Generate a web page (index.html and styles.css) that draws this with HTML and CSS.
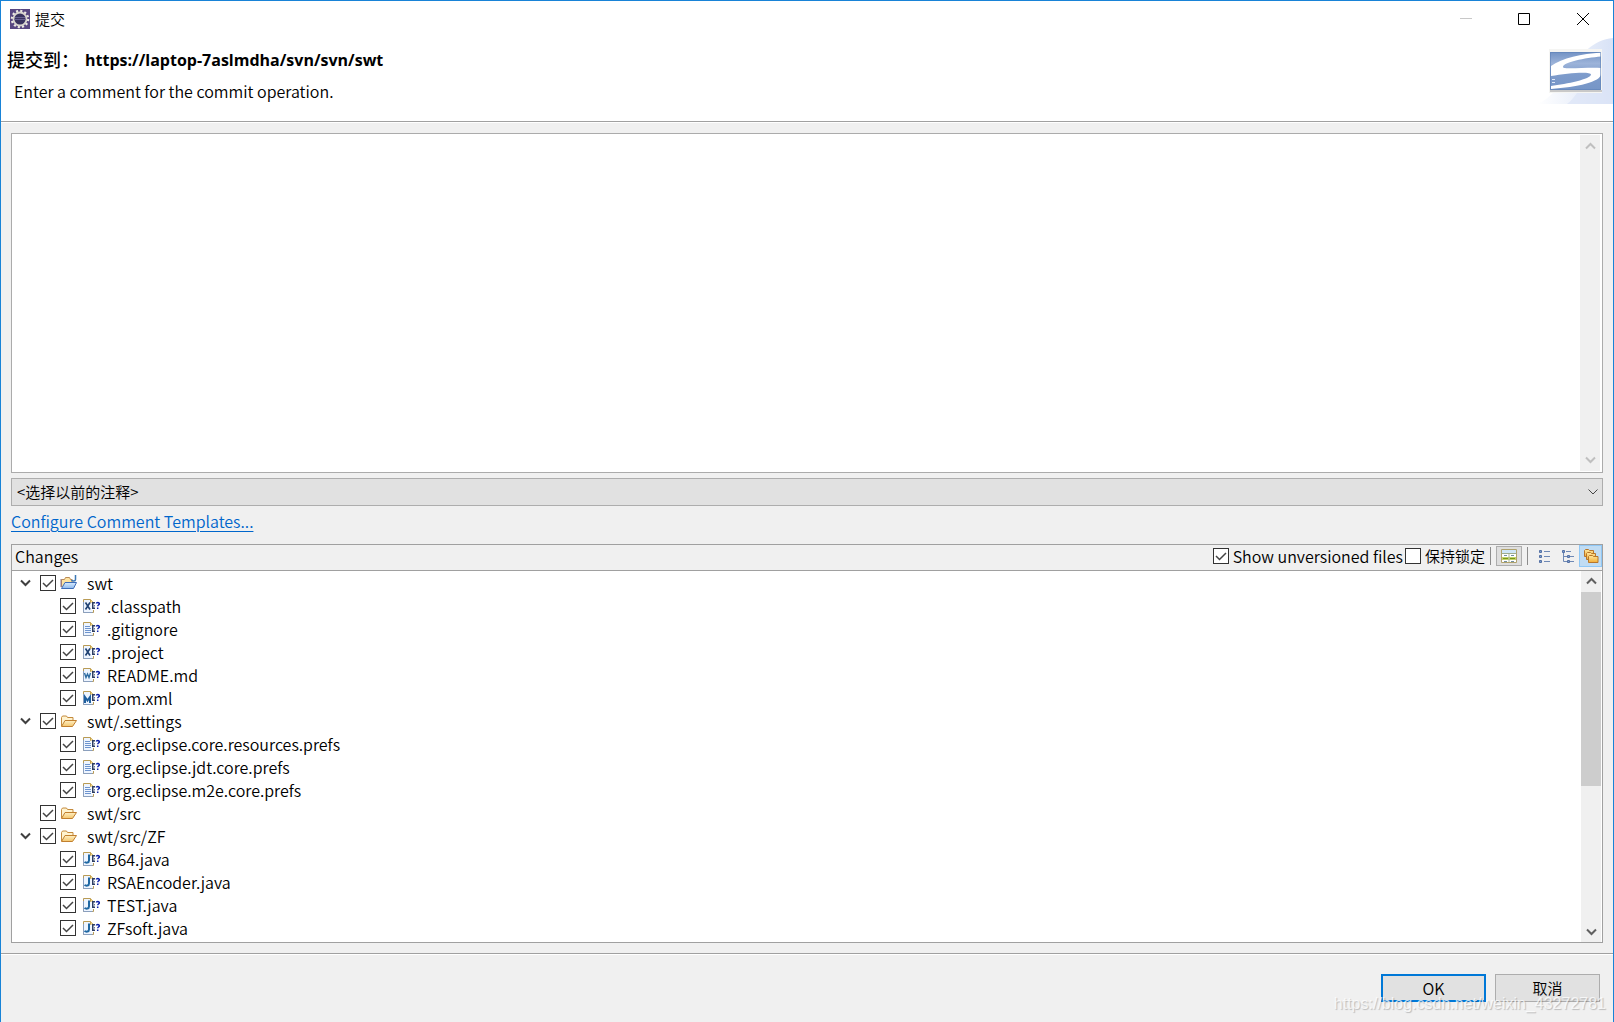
FILE: index.html
```html
<!DOCTYPE html>
<html lang="zh-CN">
<head>
<meta charset="utf-8">
<title>提交</title>
<link rel="stylesheet" href="styles.css">
</head>
<body>
<svg class="defs" aria-hidden="true">
  <linearGradient id="gFolder" x1="0" y1="0" x2="0" y2="1"><stop offset="0" stop-color="#fff0c4"/><stop offset="1" stop-color="#f3c56c"/></linearGradient>
  <linearGradient id="gGold" x1="0" y1="0" x2="0" y2="1"><stop offset="0" stop-color="#ffe9a0"/><stop offset="1" stop-color="#f2ad35"/></linearGradient>
  <linearGradient id="gBlue" x1="0" y1="0" x2="0" y2="1"><stop offset="0" stop-color="#d8ecff"/><stop offset="1" stop-color="#8fb9ec"/></linearGradient>
  <symbol id="folder" viewBox="0 0 18 16">
    <path d="M1.500 13V4.500l1-1.500h4l1 1.500h5.500V7" fill="#fff3cf" stroke="#c48a3c"/>
    <path d="M1.500 13.500L5 7.500h11.500L12.500 13.500z" fill="url(#gFolder)" stroke="#c17f2e"/>
  </symbol>
  <symbol id="project" viewBox="0 0 18 16">
    <path d="M1.500 12V4.500h3l1-2h4l1 2h1.500V8" fill="#ffe3a0" stroke="#b98a55"/>
    <path d="M1 4v8" stroke="#87708f"/>
    <path d="M1.500 13.500L5 7.500h11.500l-3 6z" fill="url(#gBlue)" stroke="#3f6db8"/>
    <path d="M15.500 0v4.500c0 2-3 2-4 .5" fill="none" stroke="#3d78b5" stroke-width="1.500"/>
  </symbol>
  <symbol id="page" viewBox="0 0 18 16">
    <path d="M1.500 1.500h7l3 3v10h-10z" fill="#eef5ff" stroke="#b99b55"/>
    <path d="M1.500 4v10.500h9" fill="none" stroke="#8a9fbe"/>
    <path d="M8.500 1.500v3h3" fill="#f1d889" stroke="#c4a14c"/>
  </symbol>
  <symbol id="status" viewBox="0 0 18 16">
    <path d="M9.500 4H18v8H9.500z" fill="#fff"/>
    <path d="M10 4h3v1.500h-1.500v4H13V11h-3z" fill="#2d3e63"/>
    <path d="M12 7h1v1.500h-1z" fill="#6b7a96"/>
    <path d="M14.300 5.500c.3-1.500 3-1.500 3 .2 0 1.400-1.600 1.200-1.600 2.600M15.700 9.500V11" fill="none" stroke="#0a1fa8" stroke-width="1.500"/>
  </symbol>
  <symbol id="file-text" viewBox="0 0 18 16">
    <use href="#page"/><path d="M3 5.500h5M3 7.500h6M3 9.500h6M3 11.500h6" stroke="#6d94cf"/><use href="#status"/>
  </symbol>
  <symbol id="file-x" viewBox="0 0 18 16">
    <use href="#page"/><path d="M3.500 4.500l4.500 7M8 4.500l-4.500 7" stroke="#1f4172" stroke-width="1.600"/><use href="#status"/>
  </symbol>
  <symbol id="file-w" viewBox="0 0 18 16">
    <use href="#page"/><path d="M2.500 6l1.500 4.500L5.500 7 7 10.500 8.500 6" fill="none" stroke="#2f6da3" stroke-width="1.400"/><use href="#status"/>
  </symbol>
  <symbol id="file-m" viewBox="0 0 18 16">
    <use href="#page"/><path d="M3 13V7l2.500 3.500L8 7v6" fill="none" stroke="#1e5f9e" stroke-width="2"/><use href="#status"/>
  </symbol>
  <symbol id="file-j" viewBox="0 0 18 16">
    <use href="#page"/><path d="M7 3.500v6c0 2.500-3 2.500-4.500 1.500" fill="none" stroke="#1f68a3" stroke-width="2"/><use href="#status"/>
  </symbol>
  <symbol id="up" viewBox="0 0 11 8"><path d="M1 6.500L5.500 2 10 6.500" fill="none" stroke="currentColor" stroke-width="2"/></symbol>
  <symbol id="down" viewBox="0 0 11 8"><path d="M1 1.500L5.500 6 10 1.500" fill="none" stroke="currentColor" stroke-width="2"/></symbol>
</svg>

<main class="window">
  <header class="banner">
    <div class="titlebar">
      <svg class="app-icon" viewBox="0 0 20 20" aria-hidden="true">
        <path d="M0 0h20v20H0z" fill="#584781"/>
        <circle cx="10" cy="10" r="8" fill="none" stroke="#eceae4" stroke-width="2.500" stroke-dasharray="2.100 2.088"/>
        <circle cx="10" cy="10" r="6.500" fill="#39335f" stroke="#d8d5cf" stroke-width="1.800"/>
        <path d="M5 8.500h10M4.500 10.500h11" stroke="#655f91"/>
      </svg>
      <span class="window-title">提交</span>
      <button class="win-btn min" aria-label="最小化" disabled><svg viewBox="0 0 12 12"><path d="M0 5.500h12" stroke="#c8c8c8"/></svg></button>
      <button class="win-btn" aria-label="最大化"><svg viewBox="0 0 12 12"><path d="M.5.5h11v11H.5z" fill="none" stroke="#000"/></svg></button>
      <button class="win-btn" aria-label="关闭"><svg viewBox="0 0 12 12"><path d="M0 0l12 12M12 0L0 12" stroke="#000"/></svg></button>
    </div>
    <div class="banner-row">
      <div class="banner-text">
        <h1><span class="cjk">提交到：</span><span>https://laptop-7aslmdha/svn/svn/swt</span></h1>
        <p>Enter a comment for the commit operation.</p>
      </div>
      <svg class="logo" viewBox="0 0 76 66" aria-hidden="true">
        <defs>
          <linearGradient id="gSky" x1="0" x2="1"><stop offset="0" stop-color="#fff"/><stop offset="1" stop-color="#d8e2f6"/></linearGradient>
          <linearGradient id="gLogo" x1="0" y1="0" x2="0" y2="1"><stop offset="0" stop-color="#7292c4"/><stop offset=".3" stop-color="#9cb3d9"/><stop offset=".6" stop-color="#7d9bcb"/><stop offset="1" stop-color="#7696c7"/></linearGradient>
        </defs>
        <path d="M0 66C30 55 36 4 76 0v66z" fill="url(#gSky)"/>
        <path d="M76 22C52 26 44 56 30 66h46z" fill="#dbe4f7" opacity=".7"/>
        <path d="M12 11h53v44H12z" fill="#f5f5f3"/>
        <path d="M13 52h52v2H13z" fill="#c9c9c9"/>
        <path d="M13 14h51v38H13z" fill="url(#gLogo)"/>
        <path d="M64 14.500C45 16 25 20 14 28v10c16-3 40-5 40-1.500C54 41 30 46 14 48v3c26-2 50-7 50-15v-6c-14-1-38 2-38-1 0-5 22-9 38-10.500z" fill="#fff"/>
        <path d="M15 41.500h3M15 44.500h3" stroke="#dce7f8"/>
        <path d="M13.500 14.500h50v37h-50z" fill="none" stroke="#5f82b7" opacity=".6"/>
      </svg>
    </div>
  </header>

  <section class="content">
    <div class="comment">
      <textarea aria-label="Comment"></textarea>
      <div class="scrollbar disabled"><svg><use href="#up"/></svg><svg><use href="#down"/></svg></div>
    </div>
    <select class="previous" aria-label="以前的注释"><option>&lt;选择以前的注释&gt;</option></select>
    <a class="templates" href="#templates">Configure Comment Templates...</a>

    <div class="changes">
      <div class="changes-head">
        <h2>Changes</h2>
        <label><input type="checkbox" checked>Show unversioned files</label>
        <label class="cjk"><input type="checkbox">保持锁定</label>
        <span class="sep"></span>
        <button class="tool pressed" aria-label="Compare pane"><svg viewBox="0 0 16 16"><path d="M.5 1.500h15v13H.5z" fill="#fff" stroke="#b0a26c"/><path d="M1 2h14v3H1z" fill="#cfe6f7"/><path d="M.5 5.500h15" stroke="#9eac8d"/><path d="M1 9h14v3H1z" fill="#c3d468"/><path d="M2 10.500h5M9 10.500h5" stroke="#7a981a"/><path d="M3 7.500h3M10 7.500h3M3 13.500h3M10 13.500h3" stroke="#718f9f"/><path d="M8 6v8" stroke="#a9b79a"/></svg></button>
        <span class="sep"></span>
        <button class="tool" aria-label="Flat list"><svg viewBox="0 0 16 16"><path d="M2.500 2.500h2v2h-2zM2.500 7.500h2v2h-2zM2.500 12.500h2v2h-2z" fill="#7ba0cf" stroke="#5470a4"/><path d="M7 3.500h6M7 8.500h6M7 13.500h6" stroke="#6f89b5"/></svg></button>
        <button class="tool" aria-label="Tree"><svg viewBox="0 0 16 16"><path d="M3.500 4v9.500H8M4 8.500h4M6 3.500h5M10 8.500h4M10 13.500h4" fill="none" stroke="#6f89b5"/><path d="M2.500 2.500h2v2h-2zM7.500 7.500h2v2h-2zM7.500 12.500h2v2h-2z" fill="#7ba0cf" stroke="#5470a4"/></svg></button>
        <button class="tool active" aria-label="Compressed folders"><svg viewBox="0 0 16 16"><path d="M1.500 2.500l1-1h3l1 1h4v6h-9z" fill="url(#gGold)" stroke="#b8762a"/><path d="M3.500 5.500l1-1h3l1 1h4v6h-9z" fill="url(#gGold)" stroke="#b8762a"/><path d="M5.500 8.500l1-1h3l1 1h4.500v6H5.500z" fill="url(#gGold)" stroke="#b8762a"/></svg></button>
      </div>
      <div class="tree-area">
        <ul class="tree">
          <li><div class="row"><svg class="twist"><use href="#down"/></svg><label><input type="checkbox" checked><svg class="ico"><use href="#project"/></svg>swt</label></div>
            <ul>
              <li class="row"><label><input type="checkbox" checked><svg class="ico"><use href="#file-x"/></svg>.classpath</label></li>
              <li class="row"><label><input type="checkbox" checked><svg class="ico"><use href="#file-text"/></svg>.gitignore</label></li>
              <li class="row"><label><input type="checkbox" checked><svg class="ico"><use href="#file-x"/></svg>.project</label></li>
              <li class="row"><label><input type="checkbox" checked><svg class="ico"><use href="#file-w"/></svg>README.md</label></li>
              <li class="row"><label><input type="checkbox" checked><svg class="ico"><use href="#file-m"/></svg>pom.xml</label></li>
            </ul></li>
          <li><div class="row"><svg class="twist"><use href="#down"/></svg><label><input type="checkbox" checked><svg class="ico"><use href="#folder"/></svg>swt/.settings</label></div>
            <ul>
              <li class="row"><label><input type="checkbox" checked><svg class="ico"><use href="#file-text"/></svg>org.eclipse.core.resources.prefs</label></li>
              <li class="row"><label><input type="checkbox" checked><svg class="ico"><use href="#file-text"/></svg>org.eclipse.jdt.core.prefs</label></li>
              <li class="row"><label><input type="checkbox" checked><svg class="ico"><use href="#file-text"/></svg>org.eclipse.m2e.core.prefs</label></li>
            </ul></li>
          <li><div class="row"><span class="twist"></span><label><input type="checkbox" checked><svg class="ico"><use href="#folder"/></svg>swt/src</label></div></li>
          <li><div class="row"><svg class="twist"><use href="#down"/></svg><label><input type="checkbox" checked><svg class="ico"><use href="#folder"/></svg>swt/src/ZF</label></div>
            <ul>
              <li class="row"><label><input type="checkbox" checked><svg class="ico"><use href="#file-j"/></svg>B64.java</label></li>
              <li class="row"><label><input type="checkbox" checked><svg class="ico"><use href="#file-j"/></svg>RSAEncoder.java</label></li>
              <li class="row"><label><input type="checkbox" checked><svg class="ico"><use href="#file-j"/></svg>TEST.java</label></li>
              <li class="row"><label><input type="checkbox" checked><svg class="ico"><use href="#file-j"/></svg>ZFsoft.java</label></li>
            </ul></li>
        </ul>
        <div class="scrollbar"><svg><use href="#up"/></svg><span class="track"><span class="thumb"></span></span><svg><use href="#down"/></svg></div>
      </div>
    </div>
  </section>

  <footer class="actions">
    <button class="btn primary">OK</button>
    <button class="btn cjk">取消</button>
    <span class="watermark">https://blog.csdn.net/weixin_43272781</span>
  </footer>
</main>
</body>
</html>
```
FILE: styles.css
```css
* { box-sizing: border-box; }

body {
  margin: 0;
  color: #000;
  font: 350 16px/22px "Noto Sans CJK SC", "Noto Sans", sans-serif;
}

button, select, textarea, input { margin: 0; font: inherit; color: inherit; border-radius: 0; }
h1, h2, p, ul { margin: 0; padding: 0; font-weight: inherit; font-size: inherit; }
ul { list-style: none; }
svg { display: block; flex: none; }
.defs { position: absolute; width: 0; height: 0; }
.cjk { font-size: 15px; }

.window {
  display: flex;
  flex-direction: column;
  min-height: 100vh;
  background: #f0f0f0;
  border: 1px solid #1883d7;
}

/* Title bar and banner */
.banner { height: 121px; background: #fff; border-bottom: 1px solid #a0a0a0; box-shadow: 0 1px #fff; flex: none; }
.titlebar { display: flex; align-items: center; height: 36px; padding: 0 1px 0 9px; }
.app-icon { width: 20px; height: 20px; margin-right: 5px; }
.window-title { flex: 1; font-size: 15px; }
.win-btn { display: flex; align-items: center; justify-content: center; width: 59px; height: 36px; padding: 0; border: 0; background: none; }
.win-btn.min { width: 57px; }
.win-btn svg { width: 12px; height: 12px; }
.banner-row { display: flex; justify-content: space-between; }
.banner-text { padding: 11px 0 0 6px; }
.banner h1 { display: flex; align-items: center; height: 24px; font: 700 16px/24px "Open Sans", sans-serif; }
.banner h1 .cjk { width: 78px; font: 500 18px/22px "Noto Sans CJK SC", sans-serif; height: 24px; }
.banner p { padding: 8px 0 0 7px; }
.logo { width: 76px; height: 66px; margin-top: 1px; }

/* Comment editor */
.content { display: flex; flex-direction: column; flex: 1; padding: 11px 10px 10px; }
.comment { display: flex; height: 340px; padding: 1px 2px 1px 1px; background: #fff; border: 1px solid #ababab; }
.comment textarea { flex: 1; padding: 2px; border: 0; outline: 0; resize: none; background: #fff; }
.scrollbar { display: flex; flex-direction: column; justify-content: space-between; align-items: center; flex: none; width: 20px; padding: 6px 0; color: #606060; background: #f0f0f0; }
.scrollbar svg { width: 11px; height: 8px; }
.scrollbar.disabled { padding: 7px 0; color: #bfbfbf; }
.track { flex: 1; align-self: stretch; padding: 7px 0; }
.thumb { display: block; height: 59%; background: #cdcdcd; }

.previous {
  appearance: none;
  width: 100%;
  height: 28px;
  margin-top: 5px;
  padding: 0 5px;
  font-size: 15px;
  border: 1px solid #adadad;
  background: #e1e1e1 url("data:image/svg+xml,%3Csvg xmlns='http://www.w3.org/2000/svg' width='10' height='6'%3E%3Cpath d='M.5.5L5 5 9.500.5' fill='none' stroke='%23444'/%3E%3C/svg%3E") no-repeat right 4px center;
}
.templates { align-self: flex-start; margin-top: 4px; color: #0066cc; text-underline-offset: 3px; }

/* Changes panel */
.changes { display: flex; flex-direction: column; flex: 1; margin-top: 12px; border: 1px solid #a0a0a0; background: #fff; }
.changes-head { display: flex; align-items: center; height: 26px; padding-bottom: 3px; background: #f0f0f0; border-bottom: 1px solid #a0a0a0; }
.changes-head h2 { flex: 1; padding-left: 3px; }
.changes-head label { display: flex; align-items: center; gap: 4px; }
.changes-head label + label { margin-left: 2px; }
.sep { width: 1px; height: 18px; margin: 0 5px; background: #8c8c8c; }
.tool { display: flex; align-items: center; justify-content: center; width: 23px; height: 22px; padding: 0; border: 0; background: none; }
.tool svg { width: 16px; height: 16px; }
.tool.pressed { width: 26px; height: 20px; background: #dedede; border: 1px solid #adadad; }
.tool.active { background: #c0dcf3; border: 1px solid #90c8f6; }

input[type="checkbox"] {
  appearance: none;
  flex: none;
  width: 16px;
  height: 16px;
  background: #fff;
  border: 1px solid #333;
}
input[type="checkbox"]:checked {
  background: #fff url("data:image/svg+xml,%3Csvg xmlns='http://www.w3.org/2000/svg' width='14' height='14'%3E%3Cpath d='M2 7l3.500 3.500L12 4' fill='none' stroke='%23444' stroke-width='1.500'/%3E%3C/svg%3E") center no-repeat;
}

.tree-area { display: flex; flex: 1; padding-right: 1px; }
.tree { flex: 1; padding: 0 0 3px 8px; }
.tree ul { padding-left: 40px; }
.row { display: flex; align-items: center; height: 23px; }
.row label { display: flex; align-items: center; line-height: 20px; }
.twist { width: 11px; height: 8px; margin-right: 9px; color: #404040; }
.ico { width: 18px; height: 16px; margin: 0 9px 0 4px; }
.tree ul .ico { margin: 0 7px 0 6px; }

/* Footer */
.actions { position: relative; display: flex; justify-content: flex-end; gap: 9px; height: 69px; padding: 20px 13px 0 0; border-top: 1px solid #a0a0a0; box-shadow: inset 0 1px #fff; flex: none; }
.btn { width: 105px; height: 28px; padding: 0; border: 1px solid #adadad; background: #e1e1e1; }
.btn.primary { border: 2px solid #0078d7; }
.watermark { position: absolute; right: 7px; bottom: 8px; font: 400 16px/20px "Liberation Sans", sans-serif; color: rgba(255, 255, 255, .75); text-shadow: 1px 1px 1px rgba(0, 0, 0, .22); pointer-events: none; }
```
